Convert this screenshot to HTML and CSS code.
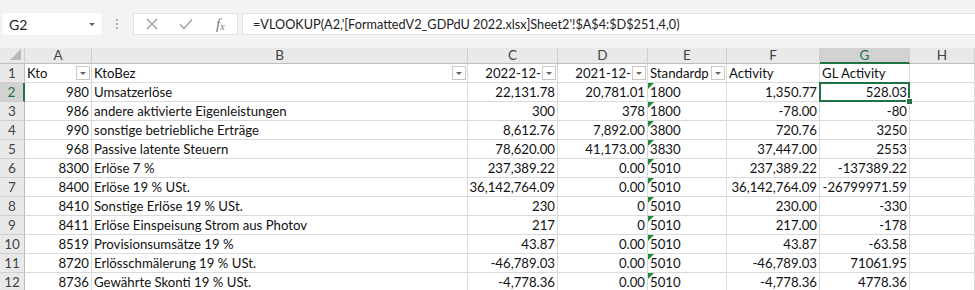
FILE: index.html
```html
<!DOCTYPE html>
<html lang="de">
<head>
    <meta charset="UTF-8">
    <title>Sheet</title>
    <link rel="stylesheet" href="styles.css">
</head>
<body>
    <div class="formula-row">
        <div class="name-box"><span>G2</span><span class="caret"></span></div>
        <div class="grip"><i></i><i></i><i></i></div>
        <div class="fx-buttons">
            <svg class="icon" width="14" height="14" viewBox="0 0 14 14"><path d="M2 2 L12 12 M12 2 L2 12" stroke="#9a9a9a" stroke-width="1.3" fill="none"/></svg>
            <svg class="icon" width="16" height="14" viewBox="0 0 16 14"><path d="M2 7.5 L6 11.5 L14 2.5" stroke="#9a9a9a" stroke-width="1.3" fill="none"/></svg>
            <span class="fx">f<sub>x</sub></span>
        </div>
        <div class="formula">=VLOOKUP(A2,'[FormattedV2_GDPdU 2022.xlsx]Sheet2'!$A$4:$D$251,4,0)</div>
    </div>

    <div class="sheet">
        <div class="ch corner"></div>
        <div class="ch">A</div>
        <div class="ch">B</div>
        <div class="ch">C</div>
        <div class="ch">D</div>
        <div class="ch">E</div>
        <div class="ch">F</div>
        <div class="ch col-sel">G</div>
        <div class="ch">H</div>

        <div class="rh">1</div>
        <div class="c"><span class="t">Kto</span><span class="filter"></span></div>
        <div class="c"><span class="t">KtoBez</span><span class="filter"></span></div>
        <div class="c"><span class="t right">2022-12-</span><span class="filter"></span></div>
        <div class="c"><span class="t right">2021-12-</span><span class="filter"></span></div>
        <div class="c"><span class="t">Standardp</span><span class="filter"></span></div>
        <div class="c"><span class="t">Activity</span></div>
        <div class="c"><span class="t">GL Activity</span></div>
        <div class="c"></div>

        <div class="rh row-sel">2</div>
        <div class="c num">980</div>
        <div class="c">Umsatzerlöse</div>
        <div class="c num">22,131.78</div>
        <div class="c num">20,781.01</div>
        <div class="c txt">1800</div>
        <div class="c num">1,350.77</div>
        <div class="c num active">528.03</div>
        <div class="c"></div>

        <div class="rh">3</div>
        <div class="c num">986</div>
        <div class="c">andere aktivierte Eigenleistungen</div>
        <div class="c num">300</div>
        <div class="c num">378</div>
        <div class="c txt">1800</div>
        <div class="c num">-78.00</div>
        <div class="c num">-80</div>
        <div class="c"></div>

        <div class="rh">4</div>
        <div class="c num">990</div>
        <div class="c">sonstige betriebliche Erträge</div>
        <div class="c num">8,612.76</div>
        <div class="c num">7,892.00</div>
        <div class="c txt">3800</div>
        <div class="c num">720.76</div>
        <div class="c num">3250</div>
        <div class="c"></div>

        <div class="rh">5</div>
        <div class="c num">968</div>
        <div class="c">Passive latente Steuern</div>
        <div class="c num">78,620.00</div>
        <div class="c num">41,173.00</div>
        <div class="c txt">3830</div>
        <div class="c num">37,447.00</div>
        <div class="c num">2553</div>
        <div class="c"></div>

        <div class="rh">6</div>
        <div class="c num">8300</div>
        <div class="c">Erlöse 7 %</div>
        <div class="c num">237,389.22</div>
        <div class="c num">0.00</div>
        <div class="c txt">5010</div>
        <div class="c num">237,389.22</div>
        <div class="c num">-137389.22</div>
        <div class="c"></div>

        <div class="rh">7</div>
        <div class="c num">8400</div>
        <div class="c">Erlöse 19 % USt.</div>
        <div class="c num">36,142,764.09</div>
        <div class="c num">0.00</div>
        <div class="c txt">5010</div>
        <div class="c num">36,142,764.09</div>
        <div class="c num">-26799971.59</div>
        <div class="c"></div>

        <div class="rh">8</div>
        <div class="c num">8410</div>
        <div class="c">Sonstige Erlöse 19 % USt.</div>
        <div class="c num">230</div>
        <div class="c num">0</div>
        <div class="c txt">5010</div>
        <div class="c num">230.00</div>
        <div class="c num">-330</div>
        <div class="c"></div>

        <div class="rh">9</div>
        <div class="c num">8411</div>
        <div class="c">Erlöse Einspeisung Strom aus Photov</div>
        <div class="c num">217</div>
        <div class="c num">0</div>
        <div class="c txt">5010</div>
        <div class="c num">217.00</div>
        <div class="c num">-178</div>
        <div class="c"></div>

        <div class="rh">10</div>
        <div class="c num">8519</div>
        <div class="c">Provisionsumsätze 19 %</div>
        <div class="c num">43.87</div>
        <div class="c num">0.00</div>
        <div class="c txt">5010</div>
        <div class="c num">43.87</div>
        <div class="c num">-63.58</div>
        <div class="c"></div>

        <div class="rh">11</div>
        <div class="c num">8720</div>
        <div class="c">Erlösschmälerung 19 % USt.</div>
        <div class="c num">-46,789.03</div>
        <div class="c num">0.00</div>
        <div class="c txt">5010</div>
        <div class="c num">-46,789.03</div>
        <div class="c num">71061.95</div>
        <div class="c"></div>

        <div class="rh">12</div>
        <div class="c num">8736</div>
        <div class="c">Gewährte Skonti 19 % USt.</div>
        <div class="c num">-4,778.36</div>
        <div class="c num">0.00</div>
        <div class="c txt">5010</div>
        <div class="c num">-4,778.36</div>
        <div class="c num">4778.36</div>
        <div class="c"></div>
    </div>
</body>
</html>
```

FILE: styles.css
```css
body {
    margin: 0;
    background-color: #f3f3f3;
    font-family: Lato, "Liberation Sans", sans-serif;
    overflow: hidden;
}

/* formula bar */
.formula-row {
    display: flex;
    align-items: stretch;
    height: 22px;
    padding: 13px 0 13px 3px;
}

.name-box {
    width: 98px;
    background-color: white;
    display: flex;
    align-items: center;
    justify-content: space-between;
    padding: 0 6px 0 6px;
    box-sizing: border-box;
    font-size: 14px;
    color: #222;
}

.caret {
    width: 0;
    height: 0;
    border-left: 3px solid transparent;
    border-right: 3px solid transparent;
    border-top: 3px solid #666;
}

.grip {
    width: 32px;
    display: flex;
    flex-direction: column;
    align-items: center;
    justify-content: center;
    gap: 2px;
}

.grip i {
    width: 2px;
    height: 2px;
    background-color: #b0b0b0;
}

.fx-buttons {
    width: 105px;
    background-color: white;
    border: 1px solid #e2e2e2;
    box-sizing: border-box;
    display: flex;
    align-items: center;
    padding-left: 11px;
    gap: 19px;
}

.fx {
    font-family: "Liberation Serif", serif;
    font-style: italic;
    font-size: 15px;
    color: #777;
    margin-left: 3px;
}

.fx sub {
    font-size: 10px;
    vertical-align: -1px;
}

.formula {
    flex: 1;
    margin-left: 4px;
    background-color: white;
    border: 1px solid #e2e2e2;
    border-right: none;
    box-sizing: border-box;
    padding-left: 10px;
    line-height: 20px;
    font-size: 12.7px;
    color: #222;
    white-space: nowrap;
}

/* grid */
.sheet {
    display: grid;
    grid-template-columns: 25px 67px 376px 90px 90px 79px 93px 90px 1fr;
    grid-template-rows: 16px repeat(12, 19px);
    background-color: white;
    font-size: 13.2px;
    color: #111;
}

.ch {
    background-color: #e9e9e9;
    border-right: 1px solid #cfcfcf;
    border-bottom: 1px solid #bdbdbd;
    box-sizing: border-box;
    text-align: center;
    font-size: 13.5px;
    line-height: 15px;
    color: #444;
}

.corner {
    position: relative;
}

.corner::after {
    content: "";
    position: absolute;
    right: 3px;
    bottom: 3px;
    border-left: 11px solid transparent;
    border-bottom: 11px solid #b9b9b9;
}

.col-sel {
    background-color: #d2d2d2;
    color: #217346;
    border-bottom: 2px solid #217346;
}

.rh {
    background-color: #e9e9e9;
    border-right: 1px solid #bdbdbd;
    border-bottom: 1px solid #cfcfcf;
    box-sizing: border-box;
    text-align: center;
    font-size: 13.5px;
    line-height: 18px;
    color: #444;
}

.row-sel {
    background-color: #d2d2d2;
    color: #217346;
    border-right: 2px solid #217346;
}

.c {
    position: relative;
    border-right: 1px solid #dadada;
    border-bottom: 1px solid #dadada;
    box-sizing: border-box;
    padding: 0 2px;
    line-height: 18px;
    white-space: nowrap;
    overflow: hidden;
    display: flex;
    align-items: center;
}

.num {
    justify-content: flex-end;
}

.t {
    flex: 1;
    overflow: hidden;
}

.t.right {
    text-align: right;
}

.filter {
    width: 14px;
    height: 14px;
    margin-left: 1px;
    margin-right: -1px;
    border: 1px solid #c8c8c8;
    box-sizing: border-box;
    background-color: white;
    display: flex;
    align-items: center;
    justify-content: center;
    flex-shrink: 0;
}

.filter::before {
    content: "";
    border-left: 3px solid transparent;
    border-right: 3px solid transparent;
    border-top: 3px solid #666;
}

/* number stored as text marker */
.txt::before {
    content: "";
    position: absolute;
    left: 0;
    top: 0;
    border-top: 6px solid #1f8a3a;
    border-right: 6px solid transparent;
}

.active {
    overflow: visible;
    z-index: 1;
}

.active::after {
    content: "";
    position: absolute;
    left: -1px;
    top: -1px;
    right: -1px;
    bottom: -1px;
    border: 2px solid #217346;
}

.active::before {
    content: "";
    position: absolute;
    right: -4px;
    bottom: -4px;
    width: 5px;
    height: 5px;
    background-color: #217346;
    border: 1px solid white;
    z-index: 2;
}
```
